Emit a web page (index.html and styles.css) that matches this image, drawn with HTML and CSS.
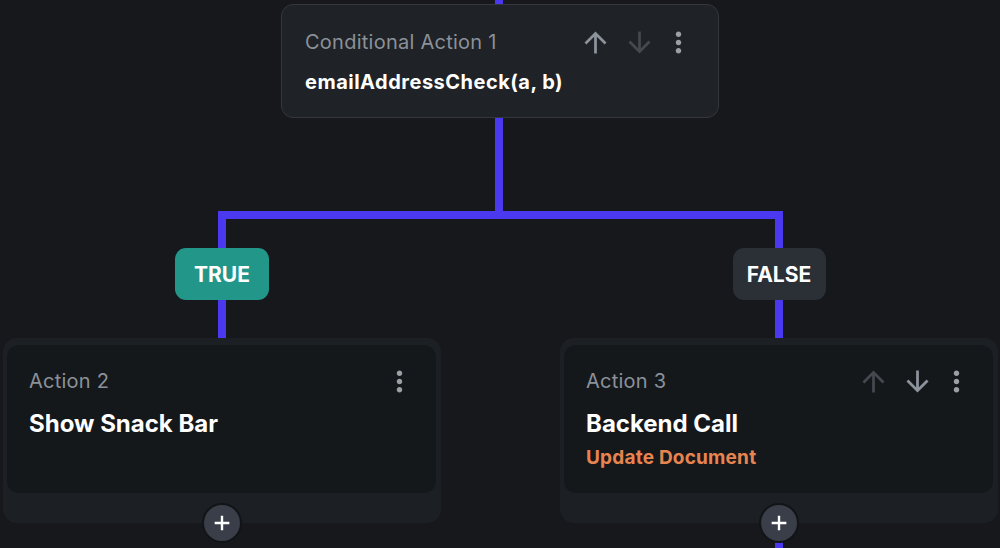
FILE: index.html
```html
<!DOCTYPE html>
<html>
<head>
<meta charset="utf-8">
<link rel="stylesheet" href="styles.css">
</head>
<body>
<div class="canvas">
  <div class="stem stem-top"></div>
  <div class="node node-top">
    <div class="node-head">
      <span class="node-label">Conditional Action 1</span>
      <div class="tools">
        <svg class="ico ico-on" viewBox="0 0 24 24"><path d="M4 12l1.41 1.41L11 7.830V20h2V7.83l5.58 5.59L20 12l-8-8-8 8z"/></svg>
        <svg class="ico ico-off" viewBox="0 0 24 24"><path d="M20 12l-1.41-1.41L13 16.17V4h-2v12.17l-5.58-5.59L4 12l8 8 8-8z"/></svg>
        <svg class="ico ico-more" viewBox="0 0 24 24"><path d="M12 8c1.1 0 2-.9 2-2s-.9-2-2-2-2 .9-2 2 .9 2 2 2zm0 2c-1.1 0-2 .9-2 2s.9 2 2 2 2-.9 2-2-.9-2-2-2zm0 6c-1.1 0-2 .9-2 2s.9 2 2 2 2-.9 2-2-.9-2-2-2z"/></svg>
      </div>
    </div>
    <div class="node-expr">emailAddressCheck(a, b)</div>
  </div>
  <div class="stem stem-mid"></div>
  <div class="split"></div>
  <div class="branches">
    <div class="branch branch-left">
      <div class="stem stem-a"></div>
      <div class="badge badge-true">TRUE</div>
      <div class="stem stem-b"></div>
      <div class="action">
        <div class="action-body">
          <div class="node-head">
            <span class="node-label">Action 2</span>
            <div class="tools">
              <svg class="ico ico-more" viewBox="0 0 24 24"><path d="M12 8c1.1 0 2-.9 2-2s-.9-2-2-2-2 .9-2 2 .9 2 2 2zm0 2c-1.1 0-2 .9-2 2s.9 2 2 2 2-.9 2-2-.9-2-2-2zm0 6c-1.1 0-2 .9-2 2s.9 2 2 2 2-.9 2-2-.9-2-2-2z"/></svg>
            </div>
          </div>
          <div class="action-title">Show Snack Bar</div>
        </div>
        <div class="add"><svg viewBox="0 0 24 24"><path d="M12 4v16M4 12h16"/></svg></div>
      </div>
    </div>
    <div class="branch branch-right">
      <div class="stem stem-a"></div>
      <div class="badge badge-false">FALSE</div>
      <div class="stem stem-b"></div>
      <div class="action">
        <div class="action-body">
          <div class="node-head">
            <span class="node-label">Action 3</span>
            <div class="tools">
              <svg class="ico ico-off" viewBox="0 0 24 24"><path d="M4 12l1.41 1.41L11 7.83V20h2V7.83l5.58 5.59L20 12l-8-8-8 8z"/></svg>
              <svg class="ico ico-on" viewBox="0 0 24 24"><path d="M20 12l-1.41-1.41L13 16.17V4h-2v12.17l-5.58-5.59L4 12l8 8 8-8z"/></svg>
              <svg class="ico ico-more" viewBox="0 0 24 24"><path d="M12 8c1.1 0 2-.9 2-2s-.9-2-2-2-2 .9-2 2 .9 2 2 2zm0 2c-1.1 0-2 .9-2 2s.9 2 2 2 2-.9 2-2-.9-2-2-2zm0 6c-1.1 0-2 .9-2 2s.9 2 2 2 2-.9 2-2-.9-2-2-2z"/></svg>
            </div>
          </div>
          <div class="action-title">Backend Call</div>
          <div class="action-sub">Update Document</div>
        </div>
        <div class="add"><svg viewBox="0 0 24 24"><path d="M12 4v16M4 12h16"/></svg></div>
      </div>
      <div class="stem stem-c"></div>
    </div>
  </div>
</div>
</body>
</html>
```

FILE: styles.css
```css
* { box-sizing: border-box; }
html, body {
  margin: 0;
  padding: 0;
  background: #16181b;
  width: 1000px;
  height: 548px;
  overflow: hidden;
  font-family: Inter, "Noto Sans", sans-serif;
}
.canvas {
  width: 1000px;
  display: flex;
  flex-direction: column;
}
.stem {
  width: 8px;
  background: #4b39ef;
}
.stem-top { height: 4px; margin-left: 495px; }
.stem-mid { height: 93px; margin-left: 495px; }
.node-top {
  margin-left: 281px;
  width: 438px;
  height: 114px;
  background: #1f2226;
  border: 1px solid #33363c;
  border-radius: 12px;
  padding: 19px 23px 0 23px;
}
.node-head {
  display: flex;
  align-items: center;
  justify-content: space-between;
  height: 36px;
}
.node-label {
  color: #8b9199;
  font-size: 20px;
  letter-spacing: 0.25px;
}
.tools {
  display: flex;
  align-items: center;
  gap: 11px;
}
.ico { width: 33px; height: 33px; display: block; }
.ico-on { fill: #8d939b; }
.ico-off { fill: #44484f; }
.ico-more { fill: #9ba0a7; margin-left: -5px; }
.node-expr {
  color: #ffffff;
  font-size: 20px;
  font-weight: 700;
  margin-top: 10px;
  letter-spacing: 0.5px;
}
.split {
  margin-left: 218px;
  width: 565px;
  height: 8px;
  background: #4b39ef;
}
.branches {
  display: flex;
}
.branch {
  display: flex;
  flex-direction: column;
  align-items: center;
  width: 438px;
}
.branch-left { margin-left: 3px; }
.branch-right { margin-left: 119px; }
.stem-a { height: 29px; }
.stem-b { height: 38px; }
.stem-c { height: 30px; }
.badge {
  height: 52px;
  border-radius: 11px;
  display: flex;
  align-items: center;
  justify-content: center;
  color: #ffffff;
  font-weight: 700;
  font-size: 21px;
  letter-spacing: 0;
}
.badge-true { width: 94px; background: #23968a; }
.badge-false { width: 93px; background: #2b2f36; }
.action {
  position: relative;
  width: 438px;
  height: 185px;
  background: #1c2024;
  border-radius: 14px;
  padding: 7px 5px 0 4px;
}
.action-body {
  height: 148px;
  background: #15181b;
  border-radius: 12px;
  padding: 18px 20px 0 22px;
}
.action-title {
  color: #ffffff;
  font-size: 24px;
  font-weight: 700;
  margin-top: 10px;
  letter-spacing: 0;
}
.action-sub {
  color: #e8844f;
  font-size: 19px;
  font-weight: 700;
  margin-top: 8px;
  letter-spacing: 0.2px;
}
.add {
  position: absolute;
  left: 50%;
  bottom: -20px;
  transform: translateX(-50%);
  width: 40px;
  height: 40px;
  border-radius: 50%;
  background: #393e49;
  border: 2px solid #121417;
  display: flex;
  align-items: center;
  justify-content: center;
  z-index: 2;
}
.add svg {
  width: 22px;
  height: 22px;
  stroke: #ffffff;
  stroke-width: 2.6;
  fill: none;
}
```
